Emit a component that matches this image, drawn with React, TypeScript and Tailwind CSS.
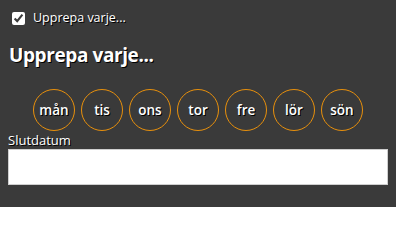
import React from 'react';

const days = ['mån', 'tis', 'ons', 'tor', 'fre', 'lör', 'sön'];

export default function App() {
  return (
    <div
      className="w-[396px] h-[207px] bg-[#3a3a3a] text-white overflow-hidden [text-shadow:1px_1px_0_#000]"
      style={{ fontFamily: '"Open Sans", "DejaVu Sans", sans-serif' }}
    >
      {/* Toggle */}
      <label className="flex items-center gap-[8px] pl-[12px] pt-[11px] h-[26px] text-[12.5px] leading-none">
        <input type="checkbox" defaultChecked className="w-[13px] h-[13px] m-0 accent-white" />
        <span>Upprepa varje...</span>
      </label>

      {/* Heading */}
      <h2 className="pl-[9px] mt-[20px] text-[19px] font-bold leading-none tracking-[-0.4px]">
        Upprepa varje...
      </h2>

      {/* Weekdays */}
      <div className="flex justify-center gap-[6px] mt-[24px]">
        {days.map((d) => (
          <button
            key={d}
            type="button"
            className="w-[42px] h-[42px] rounded-full border border-[#e8900c] flex items-center justify-center text-[13.5px] font-semibold text-white [text-shadow:1px_1px_0_#000]"
          >
            {d}
          </button>
        ))}
      </div>

      {/* End date */}
      <div className="px-[8px] mt-[1px]">
        <div className="text-[13px] leading-[17px]">Slutdatum</div>
        <input type="text" className="block w-full h-[36px] bg-white border border-[#cfcfcf] outline-none" />
      </div>
    </div>
  );
}
